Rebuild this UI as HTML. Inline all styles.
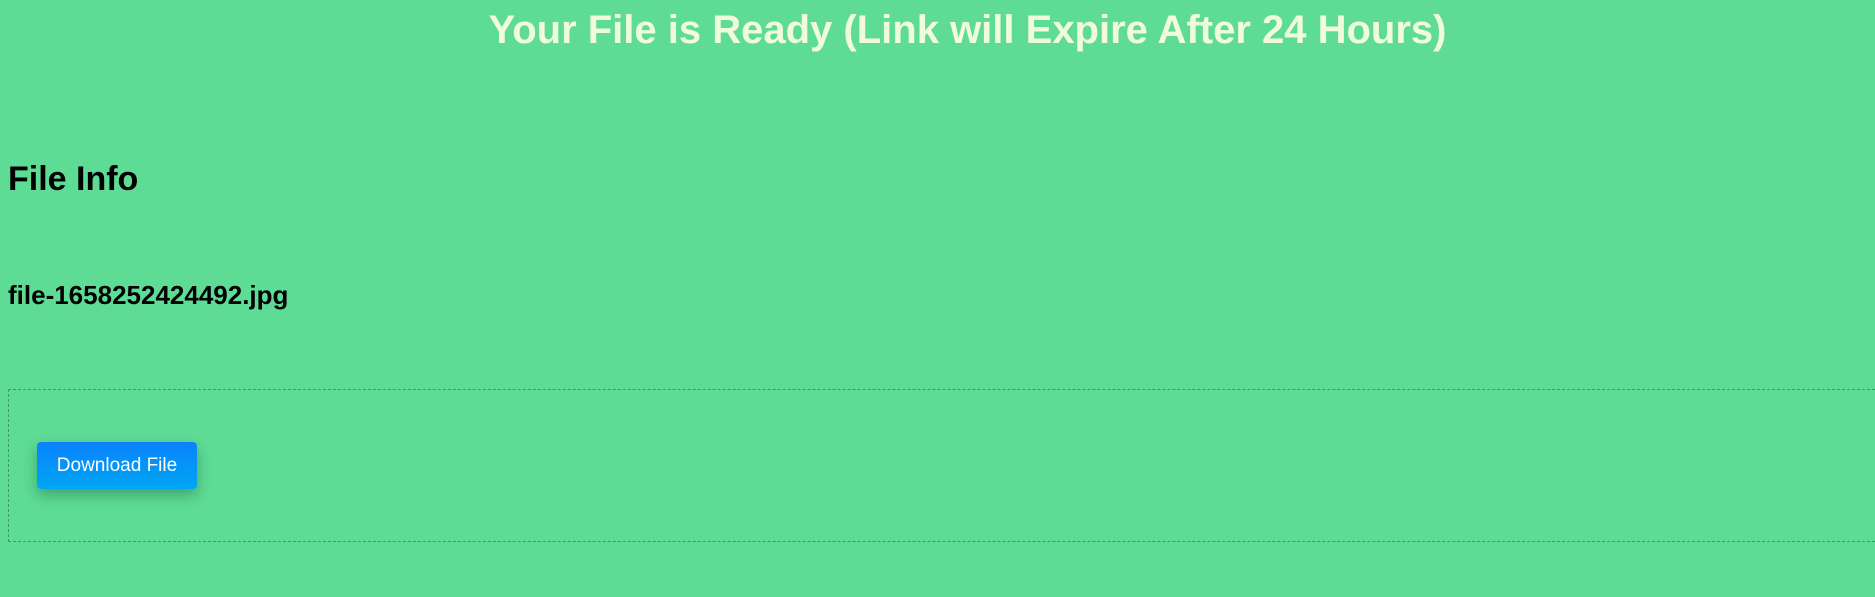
<!DOCTYPE html>
<html><head><meta charset="utf-8"><style>
html,body{margin:0;padding:0;width:1875px;height:597px;overflow:hidden;background:#5edc95;font-family:"Liberation Sans",Arial,sans-serif;}
.t{position:absolute;left:0;width:1935px;text-align:center;top:8px;font-size:40px;font-weight:bold;color:#f0fbdc;white-space:nowrap;}
.h{position:absolute;left:8px;top:160px;font-size:34px;font-weight:bold;color:#000;}
.f{position:absolute;left:8px;top:280px;font-size:26px;font-weight:bold;color:#000;}
.box{position:absolute;left:8px;top:389px;width:1900px;height:151px;border:1px dashed #3a9a68;}
.btn{position:absolute;left:37px;top:442px;width:160px;height:47px;border-radius:4px;background:linear-gradient(#0a82ff,#00a6f2);color:#fff;font-size:19px;line-height:47px;text-align:center;box-shadow:0 6px 14px rgba(0,60,40,.35);}
</style></head><body>
<div class="t">Your File is Ready (Link will Expire After 24 Hours)</div>
<div class="h">File Info</div>
<div class="f">file-1658252424492.jpg</div>
<div class="box"></div>
<div class="btn">Download File</div>
</body></html>
